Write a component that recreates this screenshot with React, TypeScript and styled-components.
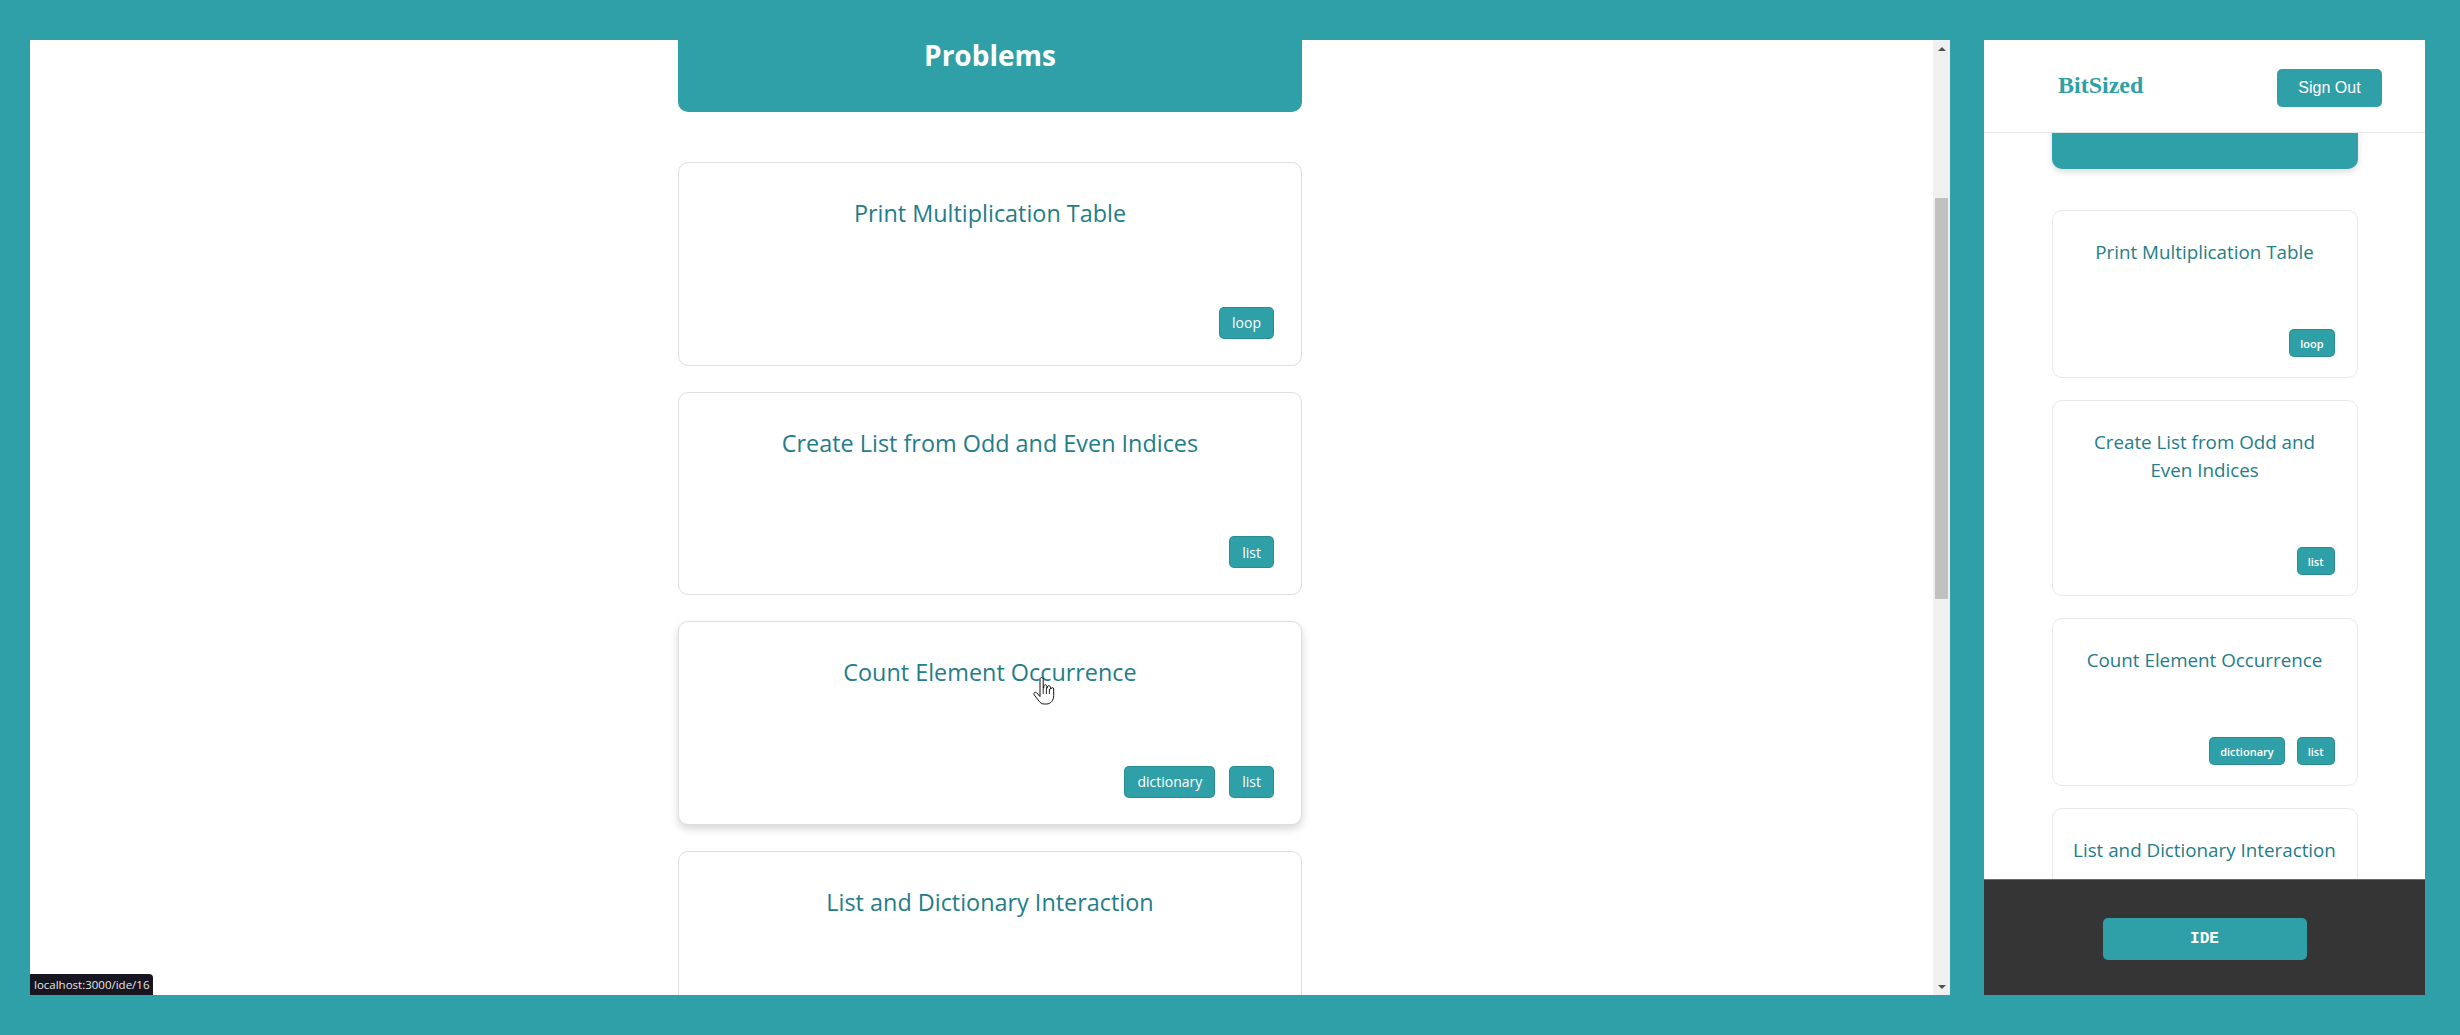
import React from "react";
import styled, { createGlobalStyle } from "styled-components";

const TEAL = "#30a0a8";
const TITLE = "#237d88";

const GlobalStyle = createGlobalStyle`
  html, body { margin: 0; padding: 0; background: ${TEAL}; }
  * { box-sizing: border-box; }
  #root { height: 1035px; }
`;

const Page = styled.div`
  display: flex;
  height: 1035px;
  padding: 40px 35px 40px 30px;
  gap: 34px;
  background: ${TEAL};
  font-family: "Open Sans", "Noto Sans", sans-serif;
`;

const LeftPanel = styled.div`
  position: relative;
  flex: 1;
  display: flex;
  background: #fff;
  overflow: hidden;
`;

const Viewport = styled.div`
  flex: 1;
  overflow: hidden;
  display: flex;
  align-items: flex-start;
  justify-content: center;
  padding-left: 17px;
`;

const Column = styled.div<{ $width: number; $offset: number }>`
  width: ${(p) => p.$width}px;
  margin-top: ${(p) => -p.$offset}px;
  display: flex;
  flex-direction: column;
  flex-shrink: 0;
`;

const Banner = styled.div<{ $small?: boolean }>`
  flex-shrink: 0;
  background: ${TEAL};
  border-radius: 0 0 10px 10px;
  color: #fff;
  text-align: center;
  font-weight: 700;
  font-size: 28px;
  line-height: 34px;
  padding: ${(p) => (p.$small ? "0" : "28px 0 40px")};
  height: ${(p) => (p.$small ? "60px" : "auto")};
  box-shadow: ${(p) => (p.$small ? "0 3px 6px rgba(0,0,0,0.14)" : "none")};
`;

const CardList = styled.div<{ $top: number; $gap: number }>`
  flex-shrink: 0;
  display: flex;
  flex-direction: column;
  margin-top: ${(p) => p.$top}px;
  gap: ${(p) => p.$gap}px;
`;

const Card = styled.div<{ $hover?: boolean; $small?: boolean }>`
  flex-shrink: 0;
  display: flex;
  flex-direction: column;
  background: #fff;
  border: 1px solid ${(p) => (p.$small ? "#e8e8e8" : "#dedede")};
  border-radius: 10px;
  padding: ${(p) => (p.$small ? "27px 22px 20px 16px" : "37px 27px 26px")};
  box-shadow: ${(p) => (p.$hover ? "0 4px 8px rgba(0,0,0,0.16)" : "none")};
`;

const CardTitle = styled.div<{ $small?: boolean }>`
  color: ${TITLE};
  text-align: center;
  font-size: ${(p) => (p.$small ? "18.8px" : "23.4px")};
  line-height: ${(p) => (p.$small ? "28px" : "27.6px")};
  margin: ${(p) => (p.$small ? "0 -3px 0 3px" : "0")};
`;

const TagRow = styled.div<{ $small?: boolean }>`
  display: flex;
  justify-content: flex-end;
  gap: ${(p) => (p.$small ? "12px" : "14px")};
  margin-top: ${(p) => (p.$small ? "63px" : "79px")};
`;

const Tag = styled.span<{ $small?: boolean }>`
  display: inline-flex;
  align-items: center;
  justify-content: center;
  height: ${(p) => (p.$small ? "28px" : "32px")};
  padding: ${(p) => (p.$small ? "0 10px" : "0 12px")};
  background: ${TEAL};
  color: #fff;
  border: 1px solid rgba(0, 0, 0, 0.12);
  border-radius: 5px;
  font-size: ${(p) => (p.$small ? "11px" : "14px")};
  font-weight: ${(p) => (p.$small ? 600 : 400)};
`;

const ScrollBar = styled.div`
  width: 17px;
  background: #f0f0f0;
  display: flex;
  flex-direction: column;
  align-items: center;
`;

const ScrollArrow = styled.div<{ $down?: boolean }>`
  height: 17px;
  width: 17px;
  display: flex;
  align-items: center;
  justify-content: center;
  &::before {
    content: "";
    border-left: 4px solid transparent;
    border-right: 4px solid transparent;
    ${(p) =>
      p.$down ? "border-top: 4px solid #505050;" : "border-bottom: 4px solid #505050;"}
  }
`;

const Track = styled.div`
  flex: 1;
  width: 100%;
  display: flex;
  flex-direction: column;
  align-items: center;
`;

const Thumb = styled.div<{ $top: number; $height: number }>`
  width: 13px;
  margin-top: ${(p) => p.$top}px;
  height: ${(p) => p.$height}px;
  background: #c1c1c1;
`;

const StatusTip = styled.div`
  position: absolute;
  left: 0;
  bottom: 0;
  height: 21px;
  padding: 0 4px;
  display: flex;
  align-items: center;
  background: #17151f;
  color: #e6e6e6;
  font-size: 11.5px;
  border-top-right-radius: 4px;
`;

const Cursor = styled.svg`
  position: absolute;
  left: 1003px;
  top: 637px;
`;

const RightPanel = styled.div`
  width: 441px;
  flex-shrink: 0;
  display: flex;
  flex-direction: column;
  background: #fff;
  overflow: hidden;
`;

const TopBar = styled.header`
  height: 93px;
  flex-shrink: 0;
  display: flex;
  align-items: center;
  justify-content: space-between;
  padding: 0 43px 0 74px;
  border-bottom: 1px solid #e6e6e6;
  background: #fff;
  position: relative;
  z-index: 1;
`;

const Brand = styled.div`
  font-family: "Liberation Serif", "Times New Roman", serif;
  font-weight: 700;
  font-size: 24px;
  color: ${TEAL};
  margin-top: -1px;
`;

const SignOut = styled.button`
  width: 105px;
  height: 38px;
  border: none;
  border-radius: 5px;
  background: ${TEAL};
  color: #fff;
  font-family: "Liberation Sans", Arial, sans-serif;
  font-size: 16px;
  margin-top: 4px;
`;

const RightViewport = styled.div`
  flex: 1;
  overflow: hidden;
  display: flex;
  align-items: flex-start;
  justify-content: center;
`;

const Footer = styled.footer`
  height: 116px;
  flex-shrink: 0;
  background: #353535;
  border-top: 1px solid #6a6a6a;
  display: flex;
  align-items: center;
  justify-content: center;
`;

const IdeButton = styled.button`
  width: 204px;
  height: 42px;
  border: none;
  border-radius: 5px;
  background: ${TEAL};
  color: #fff;
  font-family: "Liberation Mono", "Courier New", monospace;
  font-weight: 700;
  font-size: 16px;
  margin-top: 3px;
`;

type Problem = { title: string; tags: string[] };

const problems: Problem[] = [
  { title: "Print Multiplication Table", tags: ["loop"] },
  { title: "Create List from Odd and Even Indices", tags: ["list"] },
  { title: "Count Element Occurrence", tags: ["dictionary", "list"] },
  { title: "List and Dictionary Interaction", tags: ["list"] },
];

const ProblemCard: React.FC<{ p: Problem; small?: boolean; hover?: boolean }> = ({
  p,
  small,
  hover,
}) => (
  <Card $small={small} $hover={hover}>
    <CardTitle $small={small}>{p.title}</CardTitle>
    <TagRow $small={small}>
      {p.tags.map((t) => (
        <Tag key={t} $small={small}>
          {t}
        </Tag>
      ))}
    </TagRow>
  </Card>
);

export default function App() {
  return (
    <>
      <GlobalStyle />
      <Page>
        <LeftPanel>
          <Viewport>
            <Column $width={624} $offset={30}>
              <Banner>Problems</Banner>
              <CardList $top={50} $gap={26}>
                {problems.map((p, i) => (
                  <ProblemCard key={p.title} p={p} hover={i === 2} />
                ))}
              </CardList>
            </Column>
          </Viewport>
          <ScrollBar>
            <ScrollArrow />
            <Track>
              <Thumb $top={141} $height={401} />
            </Track>
            <ScrollArrow $down />
          </ScrollBar>
          <StatusTip>localhost:3000/ide/16</StatusTip>
          <Cursor width="22" height="30" viewBox="0 0 22 30">
            <path
              d="M7 2.2c0-1 .7-1.7 1.6-1.7s1.6.7 1.6 1.7V11h.6V9.4c0-.9.7-1.6 1.5-1.6s1.5.7 1.5 1.6V11h.6V10.2c0-.9.7-1.5 1.5-1.5s1.5.6 1.5 1.5V12h.5c0-.8.7-1.4 1.4-1.4.8 0 1.4.6 1.4 1.4v6.4c0 4.6-2.6 8.6-7.3 8.6h-2.1c-2.4 0-4-1.1-5.2-2.8L1.2 17.8c-.6-.8-.4-1.8.3-2.3.8-.5 1.7-.3 2.3.4L7 19.6z"
              fill="#fff"
              stroke="#111"
              strokeWidth="1"
              strokeLinejoin="round"
            />
            <path d="M10.2 11v6M13.4 11v6M16.4 12v5" stroke="#111" strokeWidth="0.9" />
          </Cursor>
        </LeftPanel>

        <RightPanel>
          <TopBar>
            <Brand>BitSized</Brand>
            <SignOut>Sign Out</SignOut>
          </TopBar>
          <RightViewport>
            <Column $width={306} $offset={24}>
              <Banner $small />
              <CardList $top={41} $gap={22}>
                {problems.map((p) => (
                  <ProblemCard key={p.title} p={p} small />
                ))}
              </CardList>
            </Column>
          </RightViewport>
          <Footer>
            <IdeButton>IDE</IdeButton>
          </Footer>
        </RightPanel>
      </Page>
    </>
  );
}
